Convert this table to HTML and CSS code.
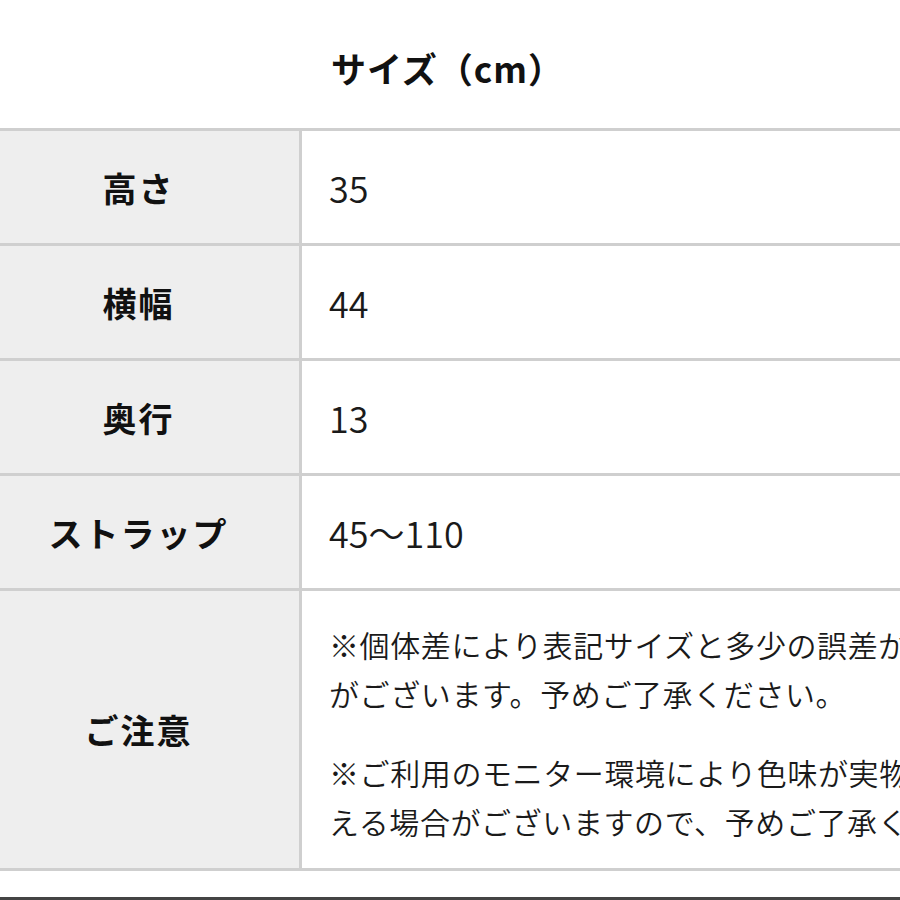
FILE: index.html
```html
<!DOCTYPE html>
<html lang="ja">
<head>
<meta charset="utf-8">
<link rel="stylesheet" href="styles.css">
</head>
<body>
<div class="page">
  <h2 class="title">サイズ（cm）</h2>
  <div class="table">
    <div class="row">
      <div class="label">高さ</div>
      <div class="value">35</div>
    </div>
    <div class="row">
      <div class="label">横幅</div>
      <div class="value">44</div>
    </div>
    <div class="row">
      <div class="label">奥行</div>
      <div class="value">13</div>
    </div>
    <div class="row">
      <div class="label">ストラップ</div>
      <div class="value">45〜110</div>
    </div>
    <div class="row row-notes">
      <div class="label">ご注意</div>
      <div class="value notes">
        <p>※個体差により表記サイズと多少の誤差が生じる場合<br>がございます。予めご了承ください。</p>
        <p>※ご利用のモニター環境により色味が実物と異なって見<br>える場合がございますので、予めご了承ください。</p>
      </div>
    </div>
  </div>
  <div class="bottom-bar"></div>
</div>
</body>
</html>
```

FILE: styles.css
```css
html, body {
  margin: 0;
  padding: 0;
  background: #ffffff;
  overflow: hidden;
}

.page {
  width: 900px;
  height: 900px;
  overflow: hidden;
  display: flex;
  flex-direction: column;
  font-family: "Noto Sans CJK JP", "Noto Sans", sans-serif;
  color: #111;
}

.title {
  margin: 0;
  height: 131px;
  box-sizing: border-box;
  padding: 44px 5px 0 0;
  text-align: center;
  font-size: 35px;
  line-height: 48px;
  font-weight: 700;
  letter-spacing: 1px;
}

.table {
  width: 1200px;
  border-top: 3px solid #cfcfcf;
}

.row {
  display: grid;
  grid-template-columns: 302px 1fr;
  height: 115px;
  box-sizing: border-box;
  border-bottom: 3px solid #cfcfcf;
}

.row-notes {
  height: 280px;
}

.label {
  background: #eeeeee;
  border-right: 3px solid #cfcfcf;
  display: flex;
  align-items: center;
  justify-content: center;
  padding-right: 22px;
  font-size: 34px;
  font-weight: 700;
  letter-spacing: 2px;
  color: #111;
}

.value {
  display: flex;
  align-items: center;
  padding-left: 27px;
  font-size: 36px;
  font-weight: 350;
  color: #1a1a1a;
  white-space: nowrap;
}

.notes {
  flex-direction: column;
  align-items: flex-start;
  justify-content: center;
  padding-left: 27px;
  padding-top: 6px;
  font-size: 30px;
  font-weight: 350;
  letter-spacing: 0.6px;
  line-height: 49px;
  color: #1a1a1a;
}

.notes p {
  margin: 0;
}

.notes p + p {
  margin-top: 30px;
}

.bottom-bar {
  margin-top: 26px;
  height: 3px;
  background: #444;
}
```
